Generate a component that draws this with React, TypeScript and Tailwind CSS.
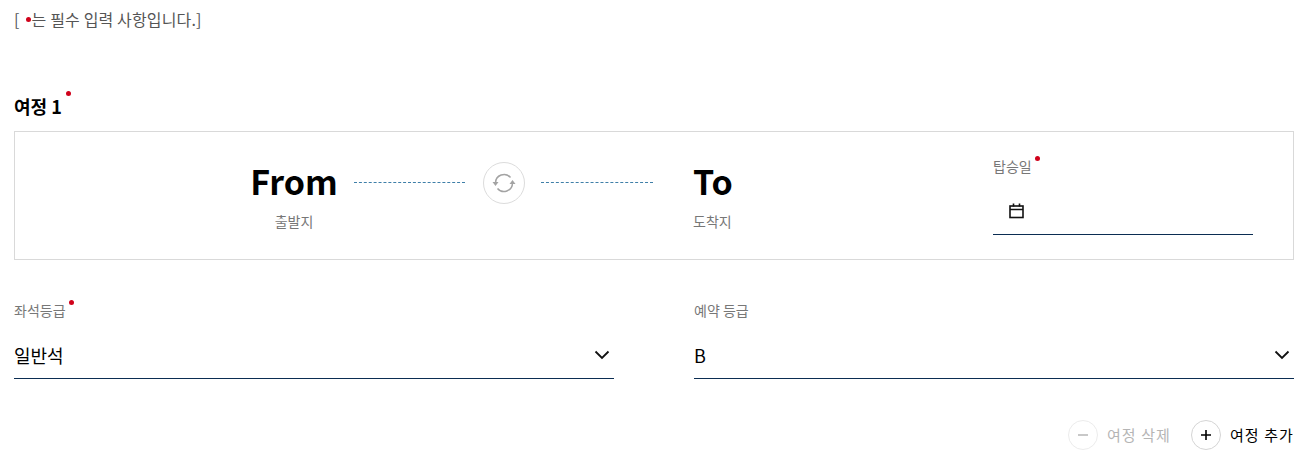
import React from "react";

const font = { fontFamily: '"Noto Sans CJK KR", "Noto Sans", sans-serif' };

function Dot({ className }: { className: string }) {
  return <span className={`absolute h-[5px] w-[5px] rounded-full bg-[#d0021b] ${className}`} />;
}

function Chevron() {
  return (
    <svg width="16" height="10" viewBox="0 0 16 10" fill="none" stroke="#111" strokeWidth="1.8">
      <path d="M1.5 1.5 8 8l6.5-6.5" />
    </svg>
  );
}

function SelectField({ label, value, required, width }: { label: string; value: string; required?: boolean; width: string }) {
  return (
    <div className={width}>
      <div className="relative block h-[18px] w-fit text-[14px] leading-[18px] text-[#777]">
        {label}
        {required && <Dot className="right-[-8px] top-[-1px]" />}
      </div>
      <div className="mt-[19px] flex h-[41px] items-center justify-between border-b border-[#0b2d52] pb-[6px] pr-[4px] text-[18px] text-black">
        <span className="leading-[26px]">{value}</span>
        <Chevron />
      </div>
    </div>
  );
}

export default function App() {
  return (
    <div className="h-[457px] w-[1309px] overflow-hidden bg-white pl-[14px] pr-[15px]" style={font}>
      <p className="flex h-[38px] items-center text-[16px] leading-[22px] tracking-[0.15px] text-[#555]">
        <span>[</span>
        <span className="ml-[6px] mr-[1px] h-[5px] w-[5px] rounded-full bg-[#d0021b]" />
        <span>는 필수 입력 사항입니다.]</span>
      </p>

      <h2 className="mt-[54px] h-[39px] text-[18px] font-bold leading-[28px] text-black">
        <span className="relative inline-block">
          여정 1
          <Dot className="right-[-9px] top-[-1px]" />
        </span>
      </h2>

      <div className="flex h-[129px] border border-[#d9d9d9]">
        <div className="ml-[236px] mt-[25px] flex w-[86px] flex-col items-center">
          <span className="text-[34px] font-bold leading-[48px] text-black">From</span>
          <span className="mt-[7px] text-[14px] leading-[18px] text-[#777]">출발지</span>
        </div>

        <div className="ml-[17px] mt-[29px] flex h-[43px] items-center">
          <span className="w-[111px] border-t border-dashed border-[#3f7fa8]" />
          <span className="ml-[18px] flex h-[42px] w-[42px] items-center justify-center rounded-full border border-[#dcdcdc]">
            <svg width="24" height="24" viewBox="0 0 24 24" fill="none" stroke="#a3a3a3" strokeWidth="1.5">
              <path d="M3.5 12a8.5 8.5 0 0 1 15-5.4" />
              <path d="M20.5 12a8.5 8.5 0 0 1-15 5.4" />
              <path d="M0.5 11h6l-3 4zM23.5 13h-6l3-4z" fill="#a3a3a3" stroke="none" />
            </svg>
          </span>
          <span className="ml-[16px] w-[112px] border-t border-dashed border-[#3f7fa8]" />
        </div>

        <div className="ml-[40px] mt-[25px] flex w-[39px] flex-col items-start">
          <span className="text-[34px] font-bold leading-[48px] text-black">To</span>
          <span className="mt-[7px] whitespace-nowrap text-[14px] leading-[18px] text-[#777]">도착지</span>
        </div>

        <div className="ml-[261px] mt-[25px] w-[260px]">
          <div className="relative block h-[18px] w-fit text-[14px] leading-[18px] text-[#777]">
            탑승일
            <Dot className="right-[-8px] top-[-1px]" />
          </div>
          <div className="mt-[14px] flex h-[46px] items-start border-b border-[#0b2d52] pl-[16px] pt-[14px]">
            <svg width="15" height="16" viewBox="0 0 15 16" fill="none" stroke="#111" strokeWidth="1.6">
              <rect x="1" y="3" width="13" height="11.5" />
              <path d="M1 6.5h13M4.5 0.5v3M10.5 0.5v3" />
            </svg>
          </div>
        </div>
      </div>

      <div className="mt-[41px] flex gap-[80px]">
        <SelectField label="좌석등급" value="일반석" required width="w-[600px]" />
        <SelectField label="예약 등급" value="B" width="w-[600px]" />
      </div>

      <div className="mt-[41px] flex items-center justify-end">
        <span className="flex h-[30px] w-[30px] items-center justify-center rounded-full border border-[#ececec] text-[#bbb]">
          <svg width="12" height="12" viewBox="0 0 12 12" stroke="currentColor" strokeWidth="1.6">
            <path d="M1 6h10" />
          </svg>
        </span>
        <span className="ml-[9px] text-[15px] leading-[20px] tracking-[1.1px] text-[#b5b5b5]">여정 삭제</span>
        <span className="ml-[20px] flex h-[30px] w-[30px] items-center justify-center rounded-full border border-[#d5d5d5] text-black">
          <svg width="12" height="12" viewBox="0 0 12 12" stroke="currentColor" strokeWidth="1.6">
            <path d="M1 6h10M6 1v10" />
          </svg>
        </span>
        <span className="ml-[9px] text-[15px] leading-[20px] tracking-[1.1px] text-black">여정 추가</span>
      </div>
    </div>
  );
}
